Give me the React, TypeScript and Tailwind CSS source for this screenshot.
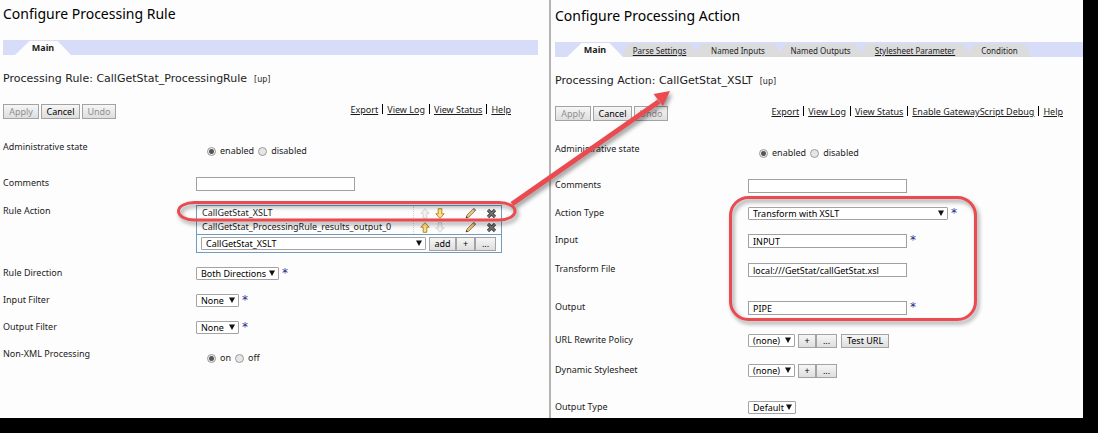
import React, { useId } from "react";

function Select({ options, width, id }: { options: string[]; width: string; id?: string }) {
  return (
    <span className={`relative inline-block h-[13px] ${width}`}>
      <select
        id={id}
        aria-label={id ? undefined : options[0]}
        className="block h-[13px] w-full appearance-none rounded-[1px] border border-[#a4a4a4] bg-white pl-1 text-[9px] leading-[11px] text-black"
      >
        {options.map((o) => (
          <option key={o}>{o}</option>
        ))}
      </select>
      <svg viewBox="0 0 6 6" className="pointer-events-none absolute top-[3px] right-[4px] size-[6px]" aria-hidden="true">
        <path d="M0 0.5H6L3 6Z" fill="#111" />
      </svg>
    </span>
  );
}

function Button({ children, className = "h-[14px]", disabled = false, label }: { children: React.ReactNode; className?: string; disabled?: boolean; label?: string }) {
  return (
    <button
      type="button"
      aria-label={label}
      disabled={disabled}
      className={`border border-[#a3a3a3] bg-linear-to-b from-[#f6f6f6] to-[#dedede] text-center text-[9px] leading-[12px] whitespace-nowrap text-black disabled:text-[#8f8f8f] ${className}`}
    >
      {children}
    </button>
  );
}

function Star() {
  return <span className="ml-[3px] h-[13px] font-['DejaVu_Sans',sans-serif] text-[12px] leading-[13px] text-[#2b2b8c]">*</span>;
}

function Row({ label, height, htmlFor, children }: { label: string; height: string; htmlFor?: string; children: React.ReactNode }) {
  return (
    <div className={`flex items-start ${height}`}>
      {htmlFor ? (
        <label htmlFor={htmlFor} className="w-[193px] shrink-0">{label}</label>
      ) : (
        <span className="w-[193px] shrink-0">{label}</span>
      )}
      <div className="flex items-start">{children}</div>
    </div>
  );
}

function Radios({ options }: { options: string[] }) {
  const name = useId();
  return (
    <div className="flex gap-1 pt-[4px] pl-[11px]">
      {options.map((o, i) => (
        <label key={o} className="flex items-start gap-1">
          <input
            type="radio"
            name={name}
            defaultChecked={i === 0}
            className="mt-[2px] size-[9px] appearance-none rounded-full border border-[#9a9a9a] bg-[#e6e6e6] checked:bg-[radial-gradient(circle,#555_0_2px,#eee_3px)]"
          />
          {o}
        </label>
      ))}
    </div>
  );
}

function TextBox({ id, value = "" }: { id: string; value?: string }) {
  return (
    <input
      id={id}
      type="text"
      defaultValue={value}
      className="h-[14px] w-[159px] border border-[#a0a0a0] bg-white px-1 text-[9px] leading-[12px] text-black"
    />
  );
}

function Header({ title, subject, tabs, links, linksMargin }: { title: string; subject: string; tabs: React.ReactNode; links: string[]; linksMargin: string }) {
  return (
    <header>
      <h1 className="text-[14px] leading-[16px] text-black">{title}</h1>
      <nav className="mt-[18px] flex h-[15px] bg-[#d7dcf8] pl-3">{tabs}</nav>
      <h2 className="mt-[17px] flex gap-[7px] font-['DejaVu_Sans',Verdana,sans-serif] text-[11px] leading-[14px]">
        {subject}
        <a href="#up" className="pt-[2px] text-[8px] leading-[12px]">[up]</a>
      </h2>
      <div className="mt-[18px] mb-[22px] flex items-start justify-between">
        <div className="flex gap-[2px]">
          <Button disabled className="h-[15px] w-[36px]">Apply</Button>
          <Button className="h-[15px] w-[39px]">Cancel</Button>
          <Button disabled className="h-[15px] w-[34px]">Undo</Button>
        </div>
        <div className={`flex ${linksMargin}`}>
          {links.map((l, i) => (
            <React.Fragment key={l}>
              {i > 0 && <span className="mx-1 h-[10px] w-px bg-black" />}
              <a href="#link" className="leading-[12px] underline">{l}</a>
            </React.Fragment>
          ))}
        </div>
      </div>
    </header>
  );
}

function MainTab() {
  return (
    <a href="#main" className="mt-px w-[56px] bg-[#fdfdfd] text-center text-[9px] leading-[14px] font-bold [clip-path:polygon(26%_0,76%_0,100%_100%,0_100%)]">
      Main
    </a>
  );
}

function Tab({ label, width, underlined = false }: { label: string; width: string; underlined?: boolean }) {
  return (
    <a href="#tab" className={`mt-[2px] bg-[#dcdcdc] text-center text-[8px] leading-[13px] whitespace-nowrap [clip-path:polygon(6px_0,calc(100%-6px)_0,100%_8px,100%_100%,0_100%,0_8px)] ${width} ${underlined ? "underline" : ""}`}>
      {label}
    </a>
  );
}

function Arrow({ down = false, faded = false }: { down?: boolean; faded?: boolean }) {
  return (
    <svg viewBox="0 0 10 11" className={`h-[11px] w-[10px] ${down ? "rotate-180" : ""} ${faded ? "opacity-35 grayscale" : ""}`} aria-hidden="true">
      <path d="M5 .7L9.200 5.200H6.800V10.300H3.200V5.200H.8Z" fill="#ffe08a" stroke="#b07a14" strokeWidth=".9" strokeLinejoin="round" />
    </svg>
  );
}

function Pencil() {
  return (
    <svg viewBox="0 0 12 12" className="size-[12px]" aria-hidden="true">
      <path d="M1 11L2 8L8.800 1.200L10.900 3.200L4 10Z" fill="#efc27a" stroke="#806a50" strokeWidth=".8" />
      <path d="M8.800 1.200L10.900 3.200L9.800 4.300L7.800 2.300Z" fill="#8888a0" />
      <path d="M1 11L1.500 9.200L2.800 10.400Z" fill="#222" />
    </svg>
  );
}

function Cross() {
  return (
    <svg viewBox="0 0 11 11" className="size-[11px]" aria-hidden="true">
      <path d="M2 2L9 9M9 2L2 9" stroke="#444" strokeWidth="3.200" />
      <path d="M2 2L9 9M9 2L2 9" stroke="#777" strokeWidth="1.400" />
    </svg>
  );
}

function ActionRow({ name, first }: { name: string; first: boolean }) {
  return (
    <tr className="h-[14px]">
      <td className="pl-[5px] leading-[14px]">{name}</td>
      <td className="w-[88px] border-l border-dotted border-[#c4d4e0] p-0">
        <div className="flex h-[14px] items-center pl-[6px]">
          <button type="button" aria-label="Move up"><Arrow faded={first} /></button>
          <button type="button" aria-label="Move down" className="ml-[5px]"><Arrow down faded={!first} /></button>
          <button type="button" aria-label="Edit" className="ml-[20px]"><Pencil /></button>
          <button type="button" aria-label="Delete" className="ml-[9px]"><Cross /></button>
        </div>
      </td>
    </tr>
  );
}

function RulePanel() {
  return (
    <section className="w-1/2 pt-[6px] pr-[11px] pl-[3px]">
      <Header
        title="Configure Processing Rule"
        subject="Processing Rule: CallGetStat_ProcessingRule"
        tabs={<MainTab />}
        links={["Export", "View Log", "View Status", "Help"]}
        linksMargin="mr-[27px]"
      />
      <Row label="Administrative state" height="h-[36px]"><Radios options={["enabled", "disabled"]} /></Row>
      <Row label="Comments" height="h-[28px]" htmlFor="rule-comments"><TextBox id="rule-comments" /></Row>
      <Row label="Rule Action" height="h-[62px]">
        <div className="w-[306px] border border-[#6f9cc0]">
          <table className="w-full border-collapse">
            <tbody>
              <ActionRow name="CallGetStat_XSLT" first />
              <ActionRow name="CallGetStat_ProcessingRule_results_output_0" first={false} />
            </tbody>
          </table>
          <div className="flex h-[18px] items-center border-t border-[#6f9cc0] pl-[4px]">
            <Select options={["CallGetStat_XSLT"]} width="w-[225px]" />
            <Button className="ml-[3px] h-[14px] w-[27px]">add</Button>
            <Button className="h-[14px] w-[19px]" label="Add new">+</Button>
            <Button className="h-[14px] w-[21px]" label="More">...</Button>
          </div>
        </div>
      </Row>
      <Row label="Rule Direction" height="h-[27px]" htmlFor="direction"><Select id="direction" options={["Both Directions"]} width="w-[83px]" /><Star /></Row>
      <Row label="Input Filter" height="h-[27px]" htmlFor="input-filter"><Select id="input-filter" options={["None"]} width="w-[43px]" /><Star /></Row>
      <Row label="Output Filter" height="h-[27px]" htmlFor="output-filter"><Select id="output-filter" options={["None"]} width="w-[43px]" /><Star /></Row>
      <Row label="Non-XML Processing" height="h-[27px]"><Radios options={["on", "off"]} /></Row>
    </section>
  );
}

function ActionPanel() {
  return (
    <section className="flex-1 border-l-2 border-[#b4b4b4] pt-[8px] pl-[4px]">
      <Header
        title="Configure Processing Action"
        subject="Processing Action: CallGetStat_XSLT"
        tabs={
          <>
            <MainTab />
            <Tab label="Parse Settings" width="w-[73px]" underlined />
            <Tab label="Named Inputs" width="w-[84px]" />
            <Tab label="Named Outputs" width="w-[81px]" />
            <Tab label="Stylesheet Parameter" width="w-[108px]" underlined />
            <Tab label="Condition" width="w-[61px]" />
          </>
        }
        links={["Export", "View Log", "View Status", "Enable GatewayScript Debug", "Help"]}
        linksMargin="mr-[20px]"
      />
      <Row label="Administrative state" height="h-[36px]"><Radios options={["enabled", "disabled"]} /></Row>
      <Row label="Comments" height="h-[28px]" htmlFor="action-comments"><TextBox id="action-comments" /></Row>
      <Row label="Action Type" height="h-[27px]" htmlFor="action-type"><Select id="action-type" options={["Transform with XSLT"]} width="w-[200px]" /><Star /></Row>
      <Row label="Input" height="h-[29px]" htmlFor="input"><TextBox id="input" value="INPUT" /><Star /></Row>
      <Row label="Transform File" height="h-[38px]" htmlFor="transform-file"><TextBox id="transform-file" value="local:///GetStat/callGetStat.xsl" /></Row>
      <Row label="Output" height="h-[33px]" htmlFor="output"><TextBox id="output" value="PIPE" /><Star /></Row>
      <Row label="URL Rewrite Policy" height="h-[30px]" htmlFor="url-policy">
        <Select id="url-policy" options={["(none)"]} width="w-[47px]" />
        <Button className="ml-[3px] h-[14px] w-[18px]" label="Add policy">+</Button>
        <Button className="h-[14px] w-[21px]" label="More policies">...</Button>
        <Button className="ml-[4px] h-[14px] w-[48px]">Test URL</Button>
      </Row>
      <Row label="Dynamic Stylesheet" height="h-[37px]" htmlFor="dynamic">
        <Select id="dynamic" options={["(none)"]} width="w-[47px]" />
        <Button className="ml-[3px] h-[14px] w-[18px]" label="Add stylesheet">+</Button>
        <Button className="h-[14px] w-[21px]" label="More stylesheets">...</Button>
      </Row>
      <Row label="Output Type" height="h-[17px]" htmlFor="output-type"><Select id="output-type" options={["Default"]} width="w-[48px]" /></Row>
    </section>
  );
}

function Annotations() {
  return (
    <svg width="1098" height="433" viewBox="0 0 1098 433" className="pointer-events-none absolute top-0 left-0 [filter:drop-shadow(2px_3px_2px_rgba(0,0,0,0.4))]" aria-hidden="true">
      <g fill="none" stroke="#e94b50" strokeWidth="3">
        <rect x="178.500" y="202.500" width="336.500" height="17.500" rx="16" ry="8.700" />
        <rect x="730.500" y="197.500" width="245" height="122" rx="18" />
      </g>
      <path d="M512 204L659 101.500" stroke="#e94b50" strokeWidth="5" />
      <path d="M670 91L663 106L653.500 94Z" fill="#e94b50" />
    </svg>
  );
}

export default function App() {
  return (
    <div className="relative min-h-screen bg-black pb-[15px] font-['Noto_Sans',Verdana,sans-serif] text-[9px] leading-[12px] text-[#1c1c1c]">
      <main className="flex bg-[#fdfdfd]">
        <RulePanel />
        <ActionPanel />
        <div className="w-[15px] shrink-0 bg-black" />
      </main>
      <Annotations />
    </div>
  );
}
